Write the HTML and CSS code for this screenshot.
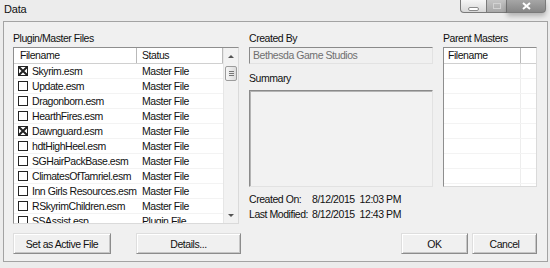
FILE: index.html
```html
<!DOCTYPE html>
<html lang="en">
<head>
    <meta charset="UTF-8">
    <title>Data</title>
    <link rel="stylesheet" href="styles.css">
</head>
<body>
    <div class="window">
        <div class="titlebar">
            <span class="title">Data</span>
            <div class="caption">
                <span class="cap-btn cap-min"><i></i></span>
                <span class="cap-btn cap-max"><i></i></span>
                <span class="cap-btn cap-close">
                    <svg width="9" height="8" viewBox="0 0 9 8"><path d="M1 1 L8 7 M8 1 L1 7" stroke="#fff" stroke-width="2"/></svg>
                </span>
            </div>
        </div>

        <div class="client">
            <div class="panes">
                <!-- plugin list -->
                <div class="pane pane-plugins">
                    <div class="label">Plugin/Master Files</div>
                    <div class="listbox plugins">
                        <div class="list-body">
                            <div class="list-head">
                                <span class="head-cell col-name">Filename</span>
                                <span class="head-cell col-status">Status</span>
                            </div>
                            <div class="rows">
                                <div class="row"><span class="col-name"><svg class="check" viewBox="0 0 10 10"><rect x="0.5" y="0.5" width="9" height="9" fill="#fff" stroke="#222"/><path d="M0 0 L10 10 M10 0 L0 10" stroke="#222" stroke-width="2"/></svg>Skyrim.esm</span><span class="col-status">Master File</span></div>
                                <div class="row"><span class="col-name"><svg class="check" viewBox="0 0 10 10"><rect x="0.5" y="0.5" width="9" height="9" fill="#fff" stroke="#222"/></svg>Update.esm</span><span class="col-status">Master File</span></div>
                                <div class="row"><span class="col-name"><svg class="check" viewBox="0 0 10 10"><rect x="0.5" y="0.5" width="9" height="9" fill="#fff" stroke="#222"/></svg>Dragonborn.esm</span><span class="col-status">Master File</span></div>
                                <div class="row"><span class="col-name"><svg class="check" viewBox="0 0 10 10"><rect x="0.5" y="0.5" width="9" height="9" fill="#fff" stroke="#222"/></svg>HearthFires.esm</span><span class="col-status">Master File</span></div>
                                <div class="row"><span class="col-name"><svg class="check" viewBox="0 0 10 10"><rect x="0.5" y="0.5" width="9" height="9" fill="#fff" stroke="#222"/><path d="M0 0 L10 10 M10 0 L0 10" stroke="#222" stroke-width="2"/></svg>Dawnguard.esm</span><span class="col-status">Master File</span></div>
                                <div class="row"><span class="col-name"><svg class="check" viewBox="0 0 10 10"><rect x="0.5" y="0.5" width="9" height="9" fill="#fff" stroke="#222"/></svg>hdtHighHeel.esm</span><span class="col-status">Master File</span></div>
                                <div class="row"><span class="col-name"><svg class="check" viewBox="0 0 10 10"><rect x="0.5" y="0.5" width="9" height="9" fill="#fff" stroke="#222"/></svg>SGHairPackBase.esm</span><span class="col-status">Master File</span></div>
                                <div class="row"><span class="col-name"><svg class="check" viewBox="0 0 10 10"><rect x="0.5" y="0.5" width="9" height="9" fill="#fff" stroke="#222"/></svg>ClimatesOfTamriel.esm</span><span class="col-status">Master File</span></div>
                                <div class="row"><span class="col-name"><svg class="check" viewBox="0 0 10 10"><rect x="0.5" y="0.5" width="9" height="9" fill="#fff" stroke="#222"/></svg>Inn Girls Resources.esm</span><span class="col-status">Master File</span></div>
                                <div class="row"><span class="col-name"><svg class="check" viewBox="0 0 10 10"><rect x="0.5" y="0.5" width="9" height="9" fill="#fff" stroke="#222"/></svg>RSkyrimChildren.esm</span><span class="col-status">Master File</span></div>
                                <div class="row"><span class="col-name"><svg class="check" viewBox="0 0 10 10"><rect x="0.5" y="0.5" width="9" height="9" fill="#fff" stroke="#222"/></svg>SSAssist.esp</span><span class="col-status">Plugin File</span></div>
                            </div>
                        </div>
                        <div class="scrollbar">
                            <div class="sb-btn"><i class="arrow-up"></i></div>
                            <div class="sb-track"><div class="thumb"><i></i><i></i><i></i></div></div>
                            <div class="sb-btn"><i class="arrow-down"></i></div>
                        </div>
                    </div>
                </div>

                <!-- file info -->
                <div class="pane pane-info">
                    <div class="label">Created By</div>
                    <div class="textbox">Bethesda Game Studios</div>
                    <div class="label summary-label">Summary</div>
                    <div class="summary"></div>
                    <div class="meta">
                        <div class="meta-row"><span class="meta-key">Created On:</span><span>8/12/2015&nbsp;&nbsp;12:03 PM</span></div>
                        <div class="meta-row"><span class="meta-key">Last Modified:</span><span>8/12/2015&nbsp;&nbsp;12:43 PM</span></div>
                    </div>
                </div>

                <!-- parent masters -->
                <div class="pane pane-parents">
                    <div class="label">Parent Masters</div>
                    <div class="listbox parents">
                        <div class="list-body">
                            <div class="list-head">
                                <span class="head-cell col-parent">Filename</span>
                                <span class="head-cell col-rest"></span>
                            </div>
                            <div class="rows empty-rows">
                                <div class="row"></div>
                                <div class="row"></div>
                                <div class="row"></div>
                                <div class="row"></div>
                                <div class="row"></div>
                                <div class="row"></div>
                                <div class="row"></div>
                                <div class="row"></div>
                            </div>
                        </div>
                    </div>
                </div>
            </div>

            <div class="footer">
                <button class="btn btn-active">Set as Active File</button>
                <button class="btn btn-details">Details...</button>
                <button class="btn btn-ok">OK</button>
                <button class="btn btn-cancel">Cancel</button>
            </div>
        </div>
    </div>
</body>
</html>
```

FILE: styles.css
```css
* {
    margin: 0;
    padding: 0;
    box-sizing: border-box;
}

body {
    background-color: #ececec;
    font-family: "Liberation Sans", Arial, sans-serif;
    font-size: 10.5px;
    letter-spacing: -0.45px;
    color: #111;
}

.window {
    width: 550px;
    height: 268px;
    background-color: #ececec;
}

/* title bar */
.titlebar {
    height: 21px;
    display: flex;
    align-items: flex-start;
}

.title {
    font-size: 11px;
    line-height: 12px;
    padding: 3px 0 0 4px;
    letter-spacing: -0.2px;
}

.caption {
    margin-left: auto;
    margin-right: 4px;
    display: flex;
}

.cap-btn {
    height: 13px;
    border: 1px solid #7a7a7a;
    border-top: 0;
    display: flex;
    align-items: center;
    justify-content: center;
}

.cap-min {
    width: 27px;
    border-radius: 0 0 0 4px;
    background: linear-gradient(#f6f6f6, #d8d8d8);
}

.cap-min i {
    width: 11px;
    height: 4px;
    margin-top: 5px;
    border: 1px solid #8a8a8a;
    border-radius: 2px;
    background-color: #fff;
}

.cap-max {
    width: 20px;
    border-left: 0;
    background: linear-gradient(#c4c4c4, #a8a8a8);
}

.cap-max i {
    width: 8px;
    height: 6px;
    border: 1px solid #d2d2d2;
}

.cap-close {
    width: 39px;
    border-left: 0;
    border-radius: 0 0 4px 0;
    background: linear-gradient(#a6a6a6, #868686);
    box-shadow: 0 3px 5px rgba(0, 0, 0, 0.25);
}

/* dialog body */
.client {
    height: 241px;
    margin: 0 2px 0 3px;
    border: 1px solid #a3a3a3;
    background-color: #f0f0f0;
    padding: 10px 9px 0 9px;
}

.panes {
    height: 191px;
    display: flex;
    gap: 10px;
}

.label {
    line-height: 12px;
    height: 12px;
    margin-bottom: 3px;
}

.pane-plugins {
    width: 226px;
}

.pane-info {
    width: 184px;
}

.pane-parents {
    width: 94px;
}

/* list views */
.listbox {
    display: flex;
    background-color: #fff;
    border: 1px solid;
    border-color: #8e8e8e #dadada #dadada #8e8e8e;
    overflow: hidden;
}

.plugins {
    height: 177px;
}

.parents {
    height: 140px;
}

.list-body {
    flex: 1;
    overflow: hidden;
}

.list-head {
    display: flex;
    height: 16px;
    border-bottom: 1px solid #d0d0d0;
}

.head-cell {
    line-height: 15px;
    border-right: 1px solid #b9b9b9;
    box-shadow: inset 1px 0 0 #fff;
}

.list-head .col-name {
    padding-left: 6px;
}

.list-head .col-status {
    padding-left: 5px;
}

.col-name {
    width: 123px;
    display: flex;
    align-items: center;
}

.col-status {
    width: 86px;
    padding-left: 5px;
}

.row {
    height: 15px;
    display: flex;
    align-items: center;
    border-bottom: 1px solid #f3f3f3;
    white-space: nowrap;
}

.row .col-name {
    padding-left: 4px;
}

.check {
    width: 10px;
    height: 10px;
    margin-right: 4px;
    flex-shrink: 0;
}

.col-parent {
    width: 77px;
    padding-left: 4px;
}

.col-rest {
    flex: 1;
    border-right: 0;
}

.empty-rows {
    height: 123px;
    background: linear-gradient(90deg, transparent 76px, #ededed 76px, #ededed 77px, transparent 77px);
}

/* scrollbar */
.scrollbar {
    width: 15px;
    display: flex;
    flex-direction: column;
    background-color: #f2f2f2;
    border-left: 1px solid #e6e6e6;
}

.sb-btn {
    height: 16px;
    display: flex;
    align-items: center;
    justify-content: center;
}

.arrow-up {
    border-left: 3px solid transparent;
    border-right: 3px solid transparent;
    border-bottom: 3px solid #555;
}

.arrow-down {
    border-left: 3px solid transparent;
    border-right: 3px solid transparent;
    border-top: 3px solid #555;
}

.sb-track {
    flex: 1;
    padding: 2px 1px 0 1px;
}

.thumb {
    height: 15px;
    border: 1px solid #9c9c9c;
    border-radius: 2px;
    background: linear-gradient(90deg, #f6f6f6, #dcdcdc);
    display: flex;
    flex-direction: column;
    align-items: center;
    justify-content: center;
    gap: 1px;
}

.thumb i {
    width: 5px;
    height: 1px;
    background-color: #777;
}

/* info column */
.textbox {
    height: 17px;
    line-height: 15px;
    padding-left: 3px;
    color: #6f6f6f;
    border: 1px solid;
    border-color: #8a8a8a #e2e2e2 #e2e2e2 #8a8a8a;
    white-space: nowrap;
}

.summary-label {
    margin-top: 8px;
    margin-bottom: 6px;
}

.summary {
    height: 97px;
    border: 1px solid;
    border-color: #8a8a8a #e2e2e2 #e2e2e2 #8a8a8a;
    box-shadow: inset 1px 1px 0 #b4b4b4;
    background-color: #f2f2f2;
}

.meta {
    margin-top: 5px;
}

.meta-row {
    display: flex;
    height: 15px;
    line-height: 15px;
    white-space: nowrap;
}

.meta-key {
    width: 63px;
}

/* buttons */
.footer {
    display: flex;
    margin-top: 10px;
}

.btn {
    height: 21px;
    font-family: inherit;
    font-size: 10.5px;
    letter-spacing: -0.45px;
    color: #111;
    background-color: #f0f0f0;
    border: 1px solid;
    border-color: #dedede #8c8c8c #8c8c8c #dedede;
    box-shadow: inset 1px 1px 0 #fff, inset -1px -1px 0 #c6c6c6;
}

.btn-active {
    width: 98px;
}

.btn-details {
    width: 105px;
    margin-left: 25px;
}

.btn-ok {
    width: 67px;
    margin-left: auto;
}

.btn-cancel {
    width: 65px;
    margin-left: 4px;
    margin-right: 1px;
}
```
